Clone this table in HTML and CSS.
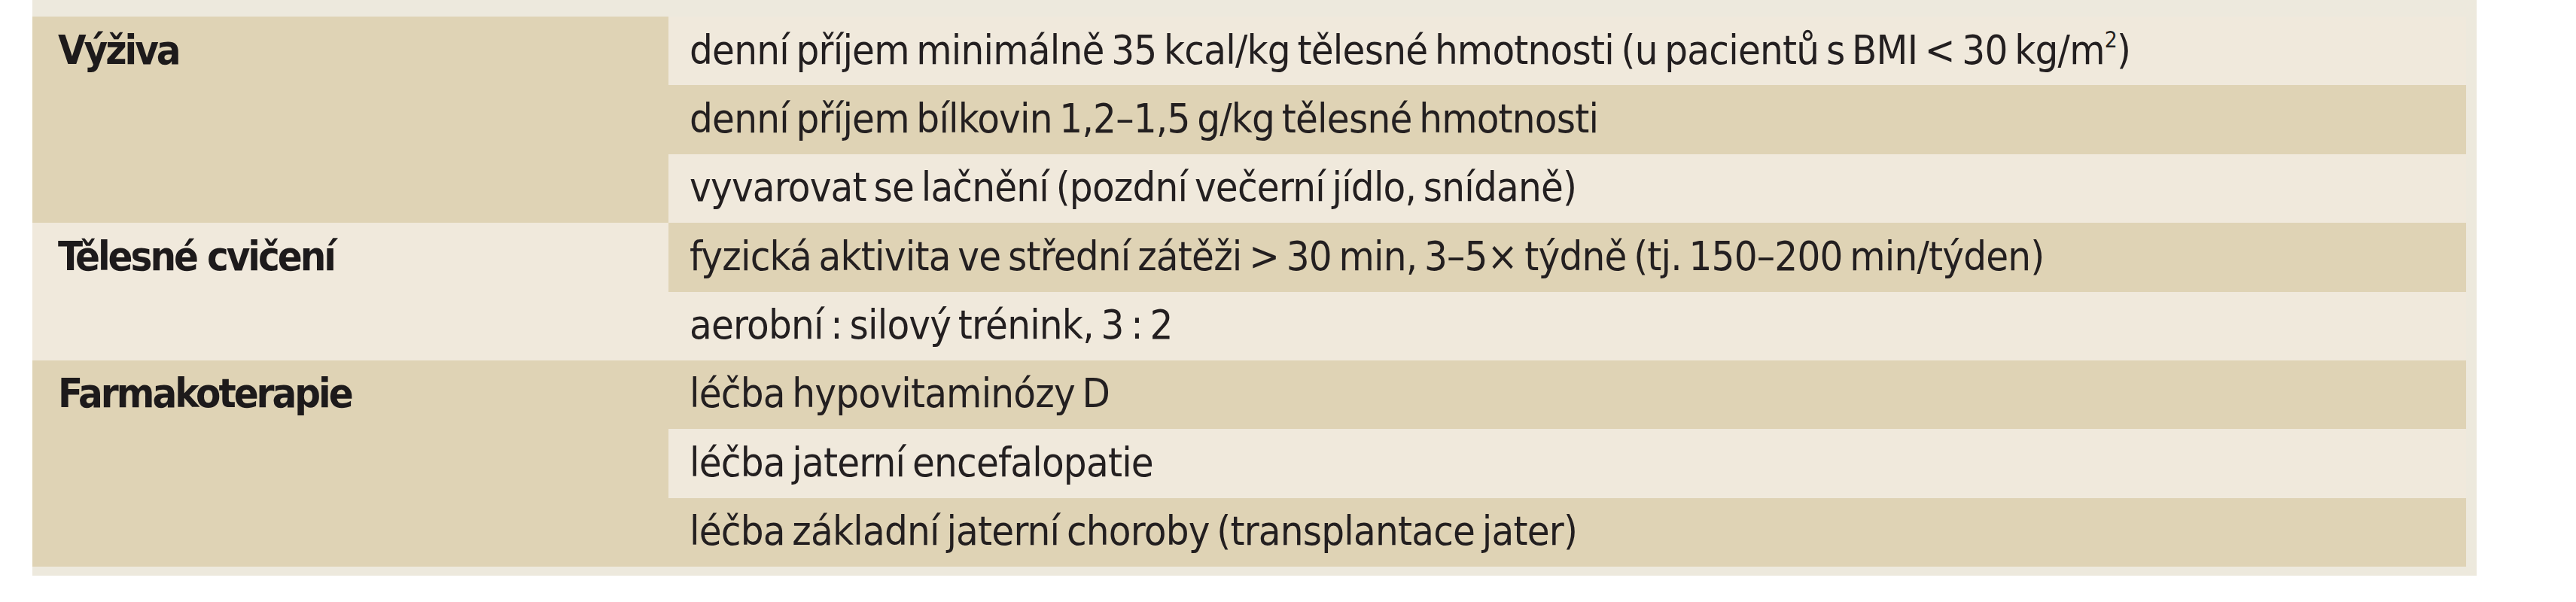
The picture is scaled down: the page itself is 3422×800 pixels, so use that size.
FILE: index.html
```html
<!DOCTYPE html>
<html lang="cs">
<head>
<meta charset="utf-8">
<title>Tabulka</title>
<link rel="stylesheet" href="styles.css">
</head>
<body>
<div class="frame">
  <table class="grid">
    <tbody>
      <tr>
        <th class="label dark" rowspan="3">Výživa</th>
        <td class="light">denní příjem minimálně 35 kcal/kg tělesné hmotnosti (u pacientů s BMI &lt; 30 kg/m<sup>2</sup>)</td>
      </tr>
      <tr><td class="dark">denní příjem bílkovin 1,2–1,5 g/kg tělesné hmotnosti</td></tr>
      <tr><td class="light">vyvarovat se lačnění (pozdní večerní jídlo, snídaně)</td></tr>
      <tr>
        <th class="label light" rowspan="2">Tělesné cvičení</th>
        <td class="dark">fyzická aktivita ve střední zátěži &gt; 30 min, 3–5× týdně (tj. 150–200 min/týden)</td>
      </tr>
      <tr><td class="light">aerobní : silový trénink, 3 : 2</td></tr>
      <tr>
        <th class="label dark" rowspan="3">Farmakoterapie</th>
        <td class="dark">léčba hypovitaminózy D</td>
      </tr>
      <tr><td class="light">léčba jaterní encefalopatie</td></tr>
      <tr><td class="dark">léčba základní jaterní choroby (transplantace jater)</td></tr>
    </tbody>
  </table>
</div>
</body>
</html>
```
FILE: styles.css
```css
html, body {
  margin: 0;
  padding: 0;
  background: #ffffff;
}

.frame {
  margin-left: 43px;
  width: 3233px;
  padding: 22px 14px 12px 0;
  background: #ede9dd;
}

.grid {
  width: 100%;
  border-collapse: collapse;
  border-spacing: 0;
  font-family: "DejaVu Sans Condensed", "DejaVu Sans", "Liberation Sans", sans-serif;
  font-stretch: condensed;
  font-size: 54px;
  letter-spacing: -0.8px;
  word-spacing: -5px;
  color: #231f20;
}

.grid th,
.grid td {
  height: 62px;
  padding: 13.5px 28px 15.9px 28px;
  line-height: 62px;
  text-align: left;
  vertical-align: top;
  white-space: nowrap;
}

.grid th.label {
  width: 783px;
  padding-left: 34px;
  font-weight: bold;
  letter-spacing: -3px;
  word-spacing: 0;
  color: #1d1a1b;
}

.dark {
  background: #dfd3b5;
}

.light {
  background: #f0e9dc;
}

sup {
  font-size: 0.55em;
  line-height: 0;
  vertical-align: 0.75em;
}
```
